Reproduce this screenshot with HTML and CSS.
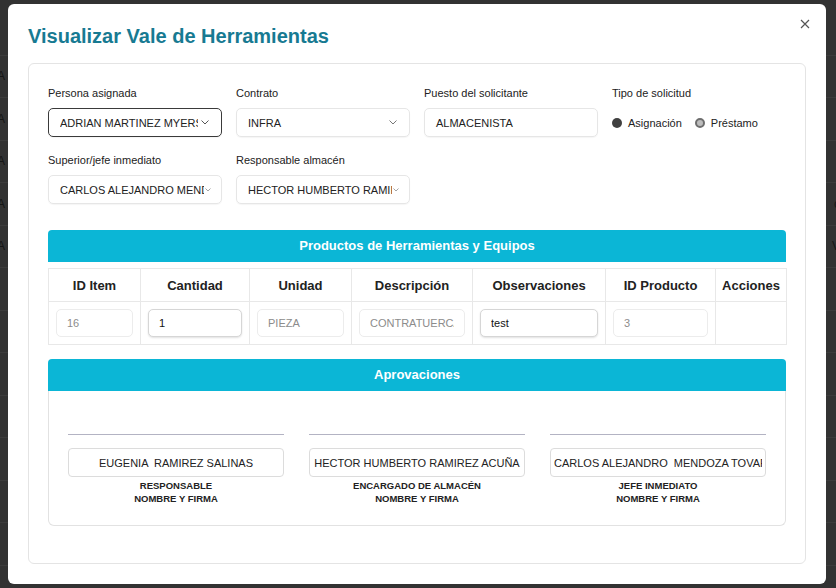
FILE: index.html
```html
<!DOCTYPE html>
<html lang="es">
<head>
<meta charset="utf-8">
<title>Visualizar Vale de Herramientas</title>
<link rel="stylesheet" href="styles.css">
</head>
<body>
<div class="backdrop">
  <div class="bg-row"><span class="bg-l"></span></div>
  <div class="bg-row"><span class="bg-l">A</span></div>
  <div class="bg-row"><span class="bg-l">A</span></div>
  <div class="bg-row"><span class="bg-l">A</span></div>
  <div class="bg-row"><span class="bg-l">A</span><span class="bg-r">c</span></div>
  <div class="bg-row"><span class="bg-l">A</span><span class="bg-r">V</span></div>
  <div class="bg-row"><span class="bg-l"></span></div>
  <div class="bg-row"><span class="bg-l"></span></div>
  <div class="bg-row"><span class="bg-l"></span></div>
  <div class="bg-row"><span class="bg-l"></span></div>
  <div class="bg-row"><span class="bg-l"></span></div>
  <div class="bg-row"><span class="bg-l"></span></div>
  <div class="bg-row"><span class="bg-l"></span></div>
</div>

<div class="modal">
  <button class="close" aria-label="Cerrar">
    <svg width="10" height="10" viewBox="0 0 10 10"><path d="M1 1L9 9M9 1L1 9" stroke="#555" stroke-width="1.2" fill="none"/></svg>
  </button>
  <h1 class="title">Visualizar Vale de Herramientas</h1>

  <div class="card">
    <div class="form-grid">
      <div class="field">
        <label class="lbl">Persona asignada</label>
        <div class="select select-focus"><span class="sel-text">ADRIAN MARTINEZ MYERS</span><svg class="chev" width="8" height="5" viewBox="0 0 8 5"><path d="M0.5 0.5L4 4L7.5 0.5" stroke="#555" stroke-width="1" fill="none"/></svg></div>
      </div>
      <div class="field">
        <label class="lbl">Contrato</label>
        <div class="select"><span class="sel-text">INFRA</span><svg class="chev" width="8" height="5" viewBox="0 0 8 5"><path d="M0.5 0.5L4 4L7.5 0.5" stroke="#777" stroke-width="1" fill="none"/></svg></div>
      </div>
      <div class="field">
        <label class="lbl">Puesto del solicitante</label>
        <div class="input-box">ALMACENISTA</div>
      </div>
      <div class="field">
        <label class="lbl">Tipo de solicitud</label>
        <div class="radios">
          <span class="radio-opt"><span class="radio radio-on"></span>Asignación</span>
          <span class="radio-opt"><span class="radio radio-off"></span>Préstamo</span>
        </div>
      </div>
      <div class="field">
        <label class="lbl">Superior/jefe inmediato</label>
        <div class="select select-tight"><span class="sel-text">CARLOS ALEJANDRO MENDOZA TOVAR</span><svg class="chev chev-small" width="6" height="4" viewBox="0 0 6 4"><path d="M0.5 0.5L3 3L5.5 0.5" stroke="#999" stroke-width="0.9" fill="none"/></svg></div>
      </div>
      <div class="field">
        <label class="lbl">Responsable almacén</label>
        <div class="select select-tight"><span class="sel-text">HECTOR HUMBERTO RAMIREZ ACUÑA</span><svg class="chev chev-small" width="6" height="4" viewBox="0 0 6 4"><path d="M0.5 0.5L3 3L5.5 0.5" stroke="#999" stroke-width="0.9" fill="none"/></svg></div>
      </div>
    </div>

    <div class="section-head">Productos de Herramientas y Equipos</div>
    <table class="items">
      <colgroup>
        <col class="c1"><col class="c2"><col class="c3"><col class="c4"><col class="c5"><col class="c6"><col class="c7">
      </colgroup>
      <thead>
        <tr><th>ID Item</th><th>Cantidad</th><th>Unidad</th><th>Descripción</th><th>Observaciones</th><th>ID Producto</th><th>Acciones</th></tr>
      </thead>
      <tbody>
        <tr>
          <td><input class="cell-in ro" value="16" readonly></td>
          <td><input class="cell-in ed" value="1"></td>
          <td><input class="cell-in ro" value="PIEZA" readonly></td>
          <td><input class="cell-in ro" value="CONTRATUERCA" readonly></td>
          <td><input class="cell-in ed" value="test"></td>
          <td><input class="cell-in ro" value="3" readonly></td>
          <td></td>
        </tr>
      </tbody>
    </table>

    <div class="section-head section-gap">Aprovaciones</div>
    <div class="approvals">
      <div class="sign">
        <div class="sign-line"></div>
        <input class="sign-name" value="EUGENIA  RAMIREZ SALINAS" readonly>
        <div class="sign-lbl">RESPONSABLE<br>NOMBRE Y FIRMA</div>
      </div>
      <div class="sign">
        <div class="sign-line"></div>
        <input class="sign-name" value="HECTOR HUMBERTO RAMIREZ ACUÑA" readonly>
        <div class="sign-lbl">ENCARGADO DE ALMACÉN<br>NOMBRE Y FIRMA</div>
      </div>
      <div class="sign">
        <div class="sign-line"></div>
        <input class="sign-name" value="CARLOS ALEJANDRO  MENDOZA TOVAR" readonly>
        <div class="sign-lbl">JEFE INMEDIATO<br>NOMBRE Y FIRMA</div>
      </div>
    </div>
  </div>
</div>
</body>
</html>
```

FILE: styles.css
```css
* { box-sizing: border-box; }
html, body {
  margin: 0;
  padding: 0;
  width: 836px;
  height: 588px;
  overflow: hidden;
  background: #323232;
  font-family: "Liberation Sans", Arial, sans-serif;
}

.backdrop {
  padding-top: 13px;
}
.bg-row {
  height: 42.5px;
  border-bottom: 1px solid #3c3c3c;
  display: flex;
  align-items: center;
  justify-content: space-between;
  font-size: 12px;
  color: #151515;
}
.bg-l { margin-left: -3px; }
.bg-r { margin-right: -4px; }

.modal {
  position: absolute;
  left: 8px;
  top: 4px;
  width: 818px;
  height: 580px;
  background: #fff;
  border-radius: 6px;
  padding: 20px 20px 20px 20px;
}
.close {
  position: absolute;
  top: 15px;
  right: 16px;
  width: 10px;
  height: 10px;
  padding: 0;
  border: 0;
  background: none;
  display: flex;
}
.title {
  margin: 0 0 15px 0;
  font-size: 20px;
  line-height: 24px;
  font-weight: bold;
  color: #177a92;
}

.card {
  border: 1px solid #e4e4e4;
  border-radius: 6px;
  padding: 22px 19px 37px 19px;
}

.form-grid {
  display: grid;
  grid-template-columns: repeat(4, minmax(0, 1fr));
  column-gap: 14px;
  row-gap: 16px;
}
.field { display: flex; flex-direction: column; min-width: 0; }
.lbl {
  font-size: 11px;
  line-height: 14px;
  color: #222;
  margin-bottom: 8px;
  white-space: nowrap;
}
.select, .input-box {
  height: 29px;
  border: 1px solid #e6e6e6;
  border-radius: 5px;
  display: flex;
  align-items: center;
  padding: 0 12px 0 11px;
  font-size: 11px;
  color: #222;
  box-shadow: 0 1px 1px rgba(0,0,0,0.04);
  min-width: 0;
}
.select-focus {
  border-color: #3a3a3a;
  border-radius: 5px;
}
.sel-text {
  flex: 1;
  min-width: 0;
  overflow: hidden;
  white-space: nowrap;
}
.chev { flex: none; margin-left: 3px; }
.select-tight { padding-right: 10px; }
.chev-small { margin-left: 1px; }

.radios {
  height: 29px;
  display: flex;
  align-items: center;
  gap: 13px;
  font-size: 11px;
  color: #222;
}
.radio-opt { display: flex; align-items: center; gap: 6px; }
.radio {
  width: 10px;
  height: 10px;
  border-radius: 50%;
  display: inline-block;
}
.radio-on { background: #404040; }
.radio-off { background: #bdbdbd; border: 2px solid #6e6e6e; }

.section-head {
  margin-top: 26px;
  height: 32px;
  background: #0bb6d6;
  border-radius: 4px 4px 0 0;
  color: #fff;
  font-weight: bold;
  font-size: 13px;
  line-height: 13px;
  display: flex;
  align-items: center;
  justify-content: center;
  padding-bottom: 1px;
}
.section-gap { margin-top: 14px; }

.items {
  margin-top: 6px;
  width: 738px;
  border-collapse: collapse;
  table-layout: fixed;
}
.c1 { width: 92px; }
.c2 { width: 109px; }
.c3 { width: 102px; }
.c4 { width: 121px; }
.c5 { width: 133px; }
.c6 { width: 110px; }
.c7 { width: 71px; }
.items th, .items td {
  border: 1px solid #e8e8e8;
}
.items th {
  height: 33px;
  font-size: 13px;
  font-weight: bold;
  color: #222;
  text-align: center;
  padding: 0;
}
.items td {
  height: 43px;
  padding: 0 7px;
}
.cell-in {
  width: 100%;
  height: 28px;
  border-radius: 5px;
  font-family: "Liberation Sans", Arial, sans-serif;
  font-size: 11px;
  padding: 0 10px;
  outline: none;
}
.ro {
  border: 1px solid #ececec;
  color: #8c8c8c;
  background: #fff;
}
.ed {
  border: 1px solid #d6d6d6;
  color: #111;
  background: #fff;
  box-shadow: 0 1px 2px rgba(0,0,0,0.12);
}

.approvals {
  border: 1px solid #e2e2e2;
  border-top: 0;
  border-radius: 0 0 6px 6px;
  padding: 43px 19px 20px 19px;
  display: grid;
  grid-template-columns: repeat(3, minmax(0, 1fr));
  column-gap: 25px;
}
.sign { display: flex; flex-direction: column; align-items: stretch; min-width: 0; }
.sign-line {
  height: 1px;
  background: #b3b3c3;
}
.sign-name {
  margin-top: 13px;
  height: 29px;
  width: 100%;
  border: 1px solid #dcdcdc;
  border-radius: 4px;
  text-align: center;
  font-family: "Liberation Sans", Arial, sans-serif;
  font-size: 11px;
  color: #222;
  padding: 0 3px;
  outline: none;
  background: #fff;
}
.sign-lbl {
  margin-top: 2px;
  text-align: center;
  font-size: 9.5px;
  line-height: 13px;
  font-weight: bold;
  color: #222;
}
```
